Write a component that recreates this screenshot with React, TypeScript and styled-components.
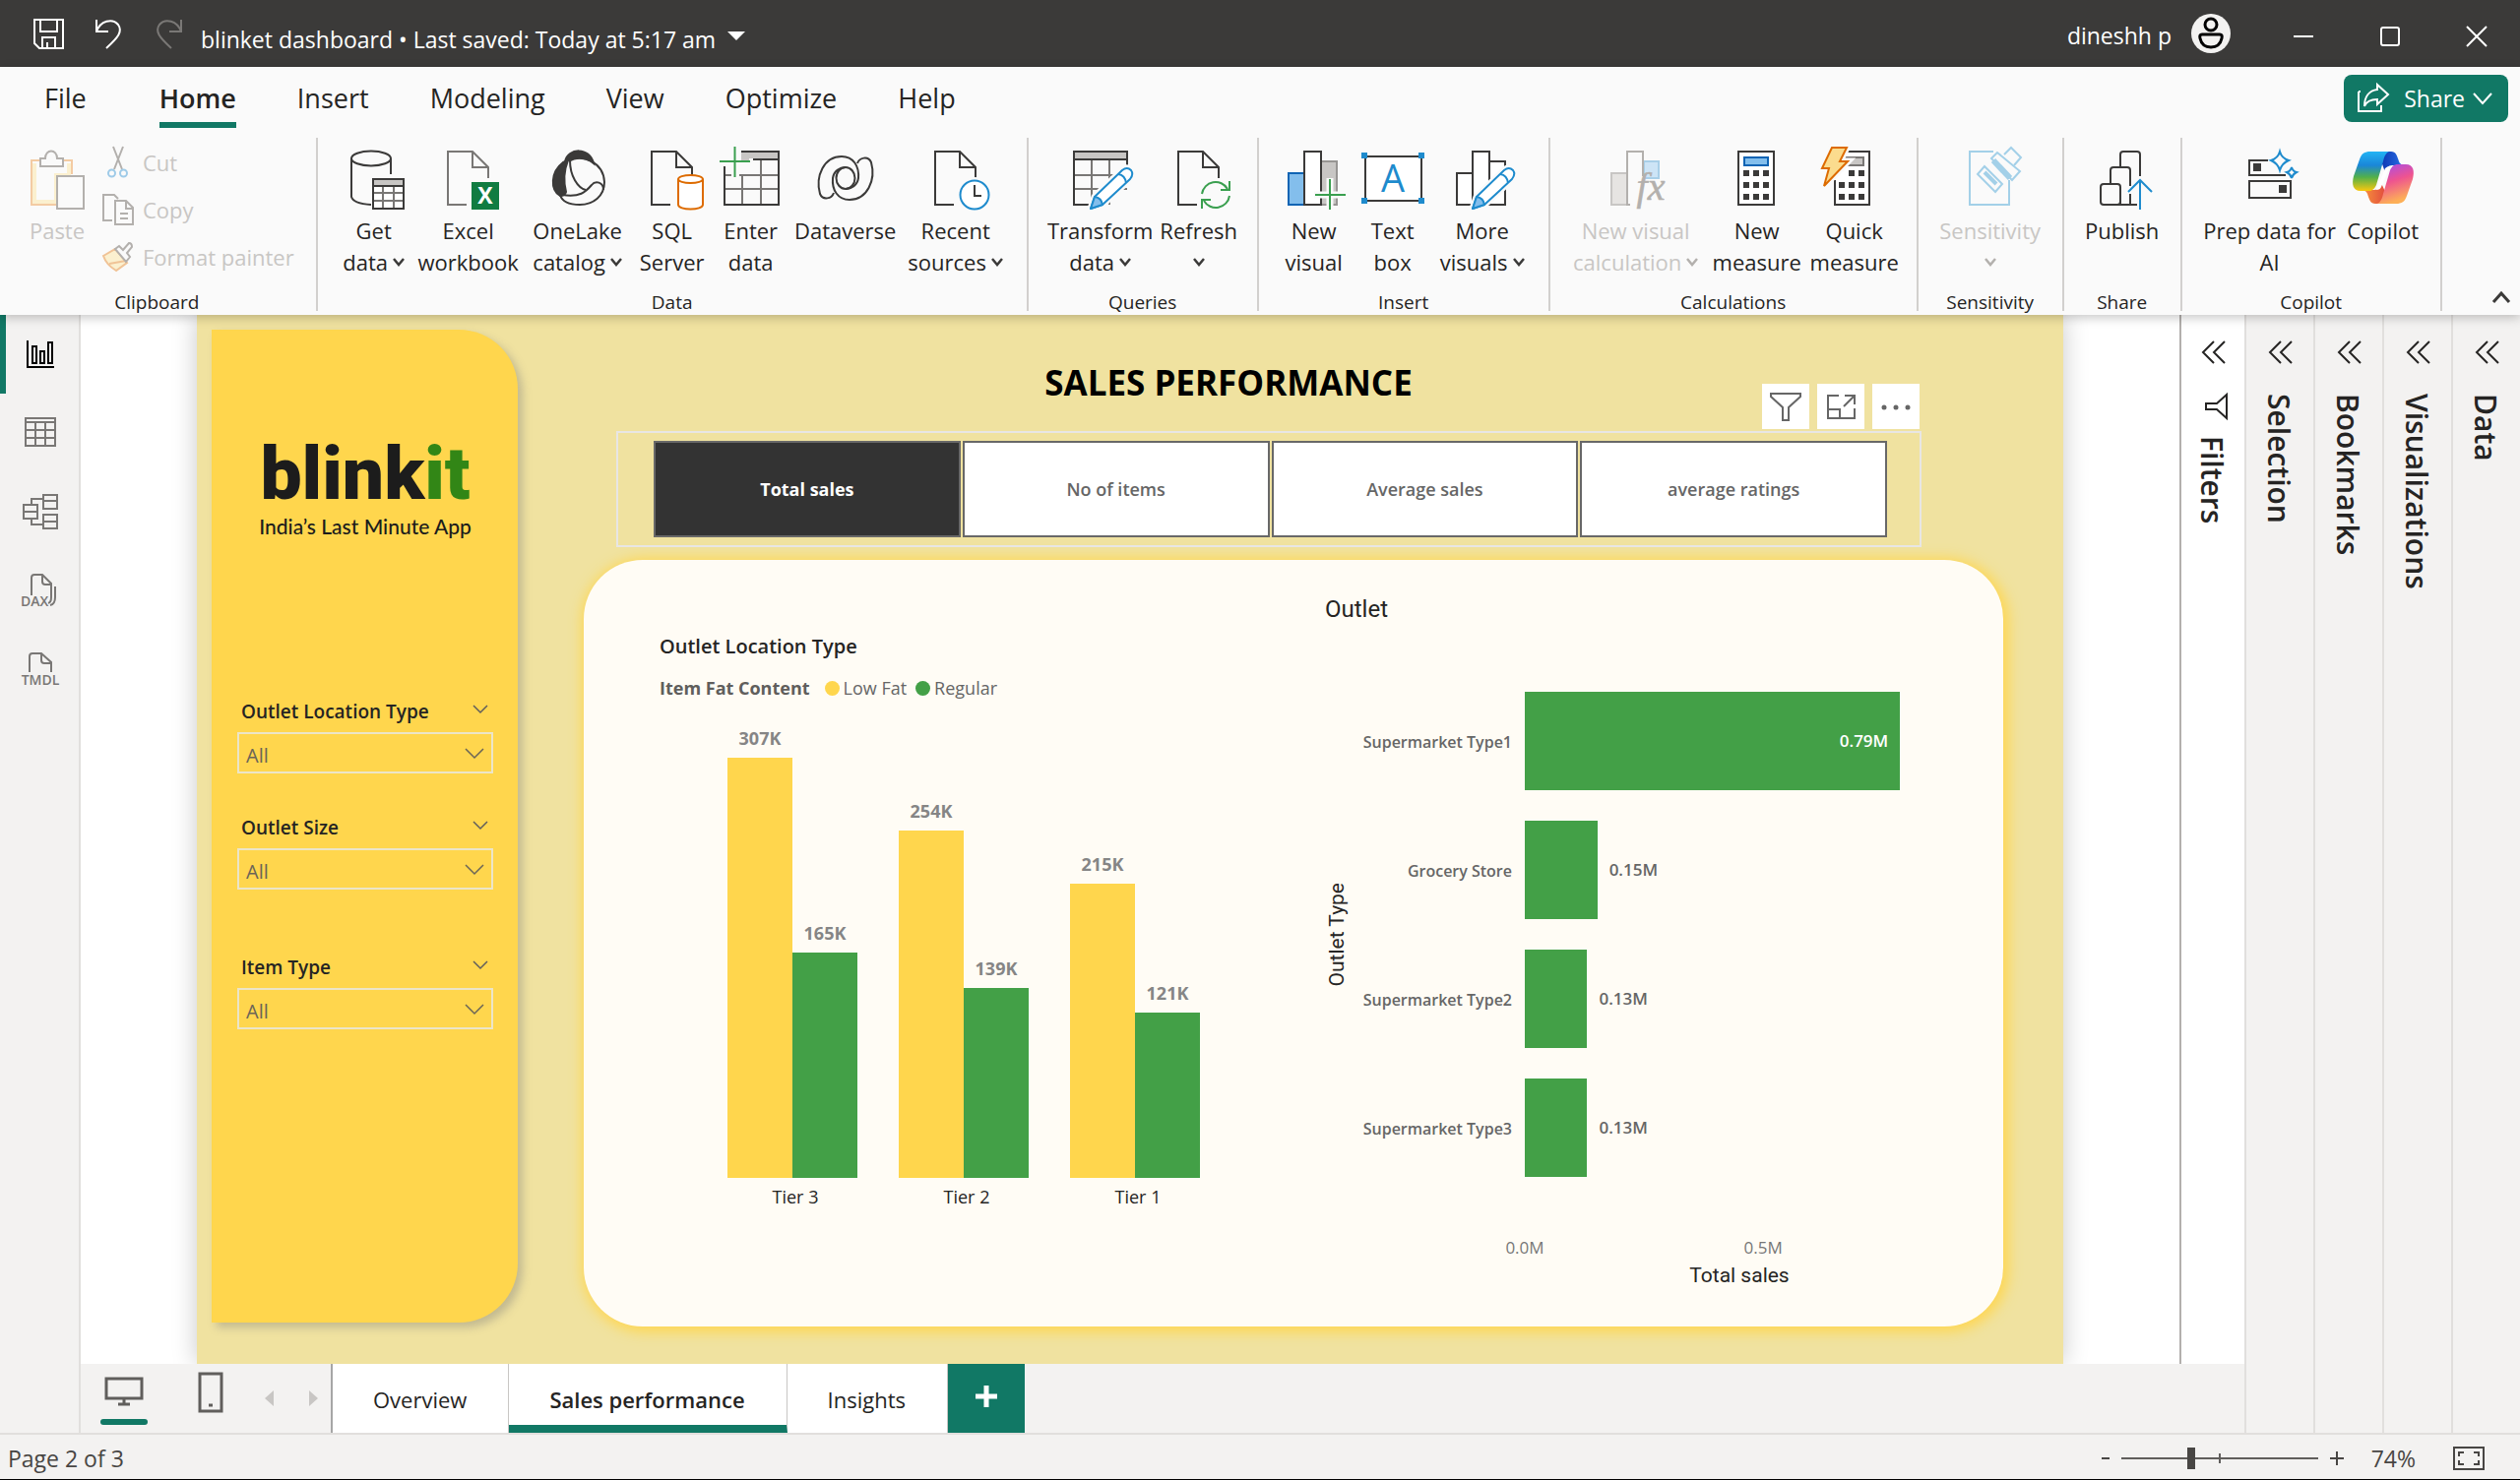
import React from "react";
import styled, { createGlobalStyle } from "styled-components";

const GlobalStyle = createGlobalStyle`
  *, *::before, *::after { box-sizing: border-box; }
  body { margin: 0; background: #f3f2f1; }
  body, button, select, input {
    font-family: "Open Sans", "Noto Sans", sans-serif;
    color: #252423;
  }
  button { border: 0; padding: 0; background: none; cursor: pointer; }
  svg { display: block; flex: none; }
`;

const teal = "#117865";
const ink = "#3b3a39";
const line = "#e1dfdd";
const yellow = "#ffd64d";
const green = "#43a047";
const blue = "#1e8bcd";
const axisFont = `Roboto, "Open Sans", sans-serif`;

/* ---------- shell ---------- */

const Shell = styled.div`
  display: flex;
  flex-direction: column;
  min-height: 100vh;
  border-bottom: 1px solid #000;
`;

const TitleBar = styled.header`
  display: flex;
  align-items: center;
  height: 68px;
  padding: 0 34px;
  background: ${ink};
`;

const QuickActions = styled.div`
  display: flex;
  align-items: center;
  gap: 30px;
`;

const DocumentButton = styled.button`
  display: flex;
  align-items: center;
  gap: 12px;
  margin: 12px auto 0 18px;
  font-size: 23px;
  line-height: 32px;
  color: #fff;

  svg { margin-bottom: 4px; }
`;

const Account = styled.button`
  display: flex;
  align-items: center;
  gap: 20px;
  margin-right: 64px;
  font-size: 23px;
  line-height: 32px;
  color: #fff;

  span { padding-top: 4px; }
`;

const WindowControls = styled.div`
  display: flex;
  align-items: center;
  gap: 68px;
  padding-top: 6px;
`;

/* ---------- ribbon ---------- */

const Ribbon = styled.div`
  position: relative;
  z-index: 2;
  padding-bottom: 4px;
  background: #fafafa;
  box-shadow: 0 3px 10px rgba(0, 0, 0, 0.22);
`;

const RibbonTabs = styled.nav`
  display: flex;
  align-items: flex-start;
  height: 72px;
  padding: 0 12px 0 14px;
`;

const RibbonTab = styled.button<{ $active?: boolean; $first?: boolean }>`
  padding: 0 31px;
  margin-right: ${(p) => (p.$first ? 12 : 0)}px;
  font-size: 27px;
  line-height: 48px;
  font-weight: ${(p) => (p.$active ? 600 : 400)};

  span {
    display: block;
    height: 62px;
    padding-top: 8px;
    border-bottom: 6px solid ${(p) => (p.$active ? teal : "transparent")};
  }
`;

const ShareButton = styled.button`
  display: flex;
  align-items: center;
  gap: 8px;
  height: 48px;
  margin: 8px 0 0 auto;
  padding: 0 16px 0 14px;
  border-radius: 8px;
  background: ${teal};
  color: #fff;
  font-size: 23px;

  span { margin-left: 7px; }
`;

const RibbonGroups = styled.div`
  display: flex;
  height: 176px;
`;

const Group = styled.section`
  display: flex;
  flex-direction: column;
  justify-content: space-between;
  padding: 0 16px;
  border-right: 2px solid #d2d0ce;
`;

const ClipboardPanel = styled(Group)`
  padding-right: 18px;
`;

const GroupBody = styled.div`
  display: flex;
`;

const GroupName = styled.h2`
  margin: 0;
  font-size: 19px;
  line-height: 18px;
  font-weight: 400;
  text-align: center;
`;

const BigButton = styled.button<{ $width: number }>`
  display: flex;
  flex-direction: column;
  align-items: center;
  gap: 5px;
  width: ${(p) => p.$width}px;
  padding-top: 9px;
  font-size: 22px;
  line-height: 32px;
  white-space: nowrap;

  &:disabled { color: #c8c6c4; }
`;

const LabelLine = styled.span`
  display: flex;
  align-items: center;
  justify-content: center;
  gap: 5px;
  min-height: 32px;
`;

const SmallButtons = styled.div`
  display: flex;
  flex-direction: column;
  padding-top: 1px;
`;

const SmallButton = styled.button`
  display: flex;
  align-items: center;
  gap: 9px;
  height: 48px;
  padding: 0 4px;
  font-size: 22px;
  white-space: nowrap;

  &:disabled { color: #c8c6c4; }
`;

const CollapseRibbon = styled.button`
  align-self: flex-end;
  margin: 0 10px 8px auto;
`;

/* ---------- workspace ---------- */

const Workspace = styled.div`
  display: flex;
  flex: 1;
  border-bottom: 2px solid ${line};
`;

const ViewRail = styled.nav`
  display: flex;
  flex-direction: column;
  width: 82px;
  border-right: 2px solid ${line};
`;

const ViewButton = styled.button<{ $active?: boolean }>`
  display: flex;
  align-items: center;
  justify-content: center;
  height: 80px;
  padding-left: 2px;
  box-shadow: inset 6px 0 ${(p) => (p.$active ? teal : "transparent")};
`;

const Center = styled.div`
  display: flex;
  flex: 1;
  flex-direction: column;
`;

const CanvasRow = styled.div`
  display: flex;
  flex: 1;
  background: #fff;
`;

const Canvas = styled.main`
  display: flex;
  flex: 1;
  padding: 0 118px;
  overflow: hidden;
`;

const Report = styled.div`
  display: grid;
  grid-template-columns: 311px 1fr;
  column-gap: 67px;
  flex: 1;
  padding: 15px 61px 38px 15px;
  background: #f0e2a0;
  box-shadow: 0 0 24px rgba(0, 0, 0, 0.22);
`;

const Pane = styled.aside<{ $open?: boolean }>`
  display: flex;
  flex-direction: column;
  align-items: center;
  gap: 30px;
  width: ${(p) => (p.$open ? 66 : 70)}px;
  padding-top: 26px;
  border-left: 2px solid ${(p) => (p.$open ? "#b3b0ad" : line)};
  background: ${(p) => (p.$open ? "#fff" : "transparent")};
`;

const PaneTitle = styled.h2`
  display: flex;
  align-items: center;
  gap: 17px;
  margin: 0;
  padding-right: 3px;
  font-size: 30px;
  line-height: 36px;
  font-weight: 600;
  writing-mode: vertical-rl;
`;

/* ---------- report: side panel ---------- */

const SidePanel = styled.section`
  margin-bottom: 4px;
  padding: 105px 25px 0 26px;
  border-radius: 0 60px 60px 0;
  background: ${yellow};
  box-shadow: 5px 5px 8px rgba(120, 120, 120, 0.38);
`;

const Brand = styled.div`
  display: flex;
  flex-direction: column;
  align-items: center;
  height: 262px;
  color: #1c1c1c;
`;

const BrandName = styled.div`
  font-family: Roboto, "Open Sans", sans-serif;
  font-size: 75px;
  line-height: 82px;
  font-weight: 900;

  em { font-style: normal; color: #328616; }
`;

const BrandLine = styled.div`
  font-family: Lato, "Open Sans", sans-serif;
  font-size: 21px;
  line-height: 26px;
  font-weight: 500;
`;

const Slicer = styled.div<{ $gapAfter?: number }>`
  margin-bottom: ${(p) => p.$gapAfter ?? 0}px;
`;

const SlicerHead = styled.div`
  display: flex;
  align-items: center;
  justify-content: space-between;
  height: 42px;
  padding: 0 5px 0 4px;

  label {
    font-size: 19px;
    line-height: 26px;
    font-weight: 600;
  }

  button { padding-bottom: 6px; }
`;

const SlicerBox = styled.div`
  position: relative;

  select {
    display: block;
    width: 100%;
    height: 42px;
    padding: 4px 7px 0;
    border: 2px solid #ece5c8;
    border-radius: 0;
    background: none;
    appearance: none;
    font-size: 20px;
    color: #6b6557;
  }

  svg {
    position: absolute;
    top: 16px;
    right: 9px;
    pointer-events: none;
  }
`;

/* ---------- report: content ---------- */

const Content = styled.div`
  display: flex;
  flex-direction: column;
`;

const ReportTitle = styled.h1`
  margin: 30px 132px 25px 0;
  font-size: 35px;
  line-height: 48px;
  font-weight: 700;
  text-align: center;
  color: #000;
`;

const MeasureFrame = styled.div`
  position: relative;
  display: grid;
  grid-template-columns: repeat(4, 1fr);
  gap: 2px;
  margin: 0 83px 13px 33px;
  padding: 8px 33px 8px 36px;
  border: 2px solid #e8e6e4;
`;

const MeasureButton = styled.button<{ $active?: boolean }>`
  height: 98px;
  border: 2px solid #686868;
  background: ${(p) => (p.$active ? "#333" : "#fff")};
  color: ${(p) => (p.$active ? "#fff" : "#666")};
  font-size: 18px;
  font-weight: ${(p) => (p.$active ? 700 : 600)};
`;

const VisualActions = styled.div`
  position: absolute;
  right: 0;
  bottom: 100%;
  display: flex;
  gap: 8px;
  padding-bottom: 4px;

  button {
    display: flex;
    align-items: center;
    justify-content: center;
    width: 48px;
    height: 46px;
    background: #fff;
  }
`;

const Card = styled.section`
  display: grid;
  grid-template-columns: 676px 1fr;
  flex: 1;
  padding: 0 50px 0 77px;
  border-radius: 60px;
  background: #fffcf5;
  box-shadow: 2px 2px 14px 3px ${yellow};
`;

const Visual = styled.figure`
  margin: 0;
  padding-top: 74px;
`;

const OutletVisual = styled(Visual)`
  padding-top: 34px;
`;

const VisualTitle = styled.figcaption`
  font-size: 20px;
  line-height: 28px;
  font-weight: 600;
`;

const OutletTitle = styled(VisualTitle)`
  font-family: ${axisFont};
  font-size: 24px;
  line-height: 32px;
  font-weight: 400;
`;

const Legend = styled.div`
  display: flex;
  align-items: center;
  margin-top: 14px;
  font-size: 18px;
  line-height: 28px;
  color: #666;

  strong { margin-right: 15px; color: #605e5c; }
`;

const LegendItem = styled.span<{ $color: string }>`
  display: flex;
  align-items: center;
  gap: 4px;
  margin-right: 9px;

  &::before {
    content: "";
    width: 15px;
    height: 15px;
    border-radius: 50%;
    background: ${(p) => p.$color};
  }
`;

const Clusters = styled.div`
  display: flex;
  gap: 42px;
  padding-left: 69px;
`;

const Cluster = styled.div`
  display: flex;
  flex-direction: column;
  gap: 7px;
  font-size: 18px;
  line-height: 24px;
  text-align: center;
`;

const ClusterName = styled.div`
  padding-left: 6px;
`;

const ClusterBars = styled.div`
  display: flex;
  align-items: flex-end;
  height: 484px;
`;

const Column = styled.div`
  display: flex;
  flex-direction: column;
  gap: 8px;
  width: 66px;
  font-weight: 700;
  color: #858585;
`;

const Fill = styled.div<{ $color: string }>`
  background: ${(p) => p.$color};
`;

const RowsLayout = styled.div`
  display: grid;
  grid-template-columns: 24px 1fr;
  align-items: center;
  margin-top: 68px;
`;

const YTitle = styled.div`
  font-family: ${axisFont};
  font-size: 21px;
  line-height: 24px;
  writing-mode: vertical-rl;
  transform: rotate(180deg);
`;

const Rows = styled.div`
  display: grid;
  gap: 31px;
`;

const Row = styled.div`
  display: grid;
  grid-template-columns: 166px 1fr;
  column-gap: 13px;
  align-items: center;
  height: 100px;
  font-size: 17px;
  line-height: 24px;
  font-weight: 600;
  color: #666;
`;

const RowName = styled.div`
  padding-top: 2px;
  font-size: 16px;
  text-align: right;
  white-space: nowrap;
`;

const Track = styled.div`
  display: flex;
  align-items: center;
  gap: 12px;
`;

const RowBar = styled.div`
  display: flex;
  align-items: center;
  justify-content: flex-end;
  height: 100px;
  padding-right: 12px;
  background: ${green};
  color: #fff;
`;

const Axis = styled.div`
  position: relative;
  height: 24px;
  margin: 60px 0 4px 203px;
  font-size: 17px;
  line-height: 24px;
  color: #777;

  span { position: absolute; transform: translateX(-50%); }
`;

const XTitle = styled.div`
  margin-left: 203px;
  font-family: ${axisFont};
  font-size: 21px;
  line-height: 24px;
  text-align: center;
`;

/* ---------- page tabs and status ---------- */

const PageBar = styled.nav`
  display: flex;
  align-items: stretch;
  height: 70px;
`;

const LayoutSwitch = styled.div`
  display: flex;
  align-items: center;
  width: 256px;
  padding-left: 20px;
  border-right: 2px solid #a6a6a6;
`;

const LayoutButton = styled.button<{ $active?: boolean }>`
  display: flex;
  flex-direction: column;
  align-items: center;
  justify-content: space-between;
  width: 48px;
  height: 54px;

  &::after {
    content: "";
    width: 48px;
    height: 6px;
    border-radius: 3px;
    background: ${(p) => (p.$active ? teal : "transparent")};
  }
`;

const LayoutGap = styled.div`
  width: 40px;
`;

const PageArrows = styled.div`
  display: flex;
  gap: 36px;
  margin-left: 31px;
`;

const PageTab = styled.button<{ $active?: boolean }>`
  padding: ${(p) => (p.$active ? 10 : 2)}px 42px 0 41px;
  border-right: 1px solid #c8c6c4;
  border-bottom: ${(p) => (p.$active ? `8px solid ${teal}` : "0")};
  background: #fff;
  font-size: 22px;
  font-weight: ${(p) => (p.$active ? 600 : 400)};
`;

const AddPage = styled.button`
  display: flex;
  align-items: center;
  justify-content: center;
  width: 78px;
  background: ${teal};
`;

const StatusBar = styled.footer`
  display: flex;
  align-items: center;
  height: 45px;
  padding: 2px 36px 0 8px;
  font-size: 23px;
  line-height: 32px;
  color: #484644;
`;

const Zoom = styled.div`
  display: flex;
  align-items: center;
  gap: 12px;
  margin-left: auto;
`;

const ZoomSlider = styled.input`
  width: 200px;
  height: 24px;
  margin: 0;
  appearance: none;
  background:
    linear-gradient(#605e5c, #605e5c) 50% 50% / 2px 10px no-repeat,
    linear-gradient(#605e5c, #605e5c) 50% 50% / 100% 2px no-repeat;

  &::-webkit-slider-thumb {
    appearance: none;
    width: 8px;
    height: 22px;
    background: #484644;
  }
`;

const ZoomValue = styled.button`
  margin: 0 26px 0 16px;
  font-size: 23px;
  color: #484644;
`;

/* ---------- icons ---------- */

type IconProps = { children: React.ReactNode; size?: number; h?: number; stroke?: string; sw?: number };

const Icon = ({ children, size = 64, h, stroke = ink, sw = 2 }: IconProps) => (
  <svg
    width={size}
    height={h ?? size}
    viewBox={`0 0 ${size} ${h ?? size}`}
    fill="none"
    stroke={stroke}
    strokeWidth={sw}
    overflow="visible"
    aria-hidden="true"
  >
    {children}
  </svg>
);

const Chevron = ({ w = 20, h = 10, color = "#605e5c", sw = 2, up = false }) => (
  <Icon size={w} h={h} stroke={color} sw={sw}>
    <path d={up ? `M1 ${h - 1}L${w / 2} 1L${w - 1} ${h - 1}` : `M1 1L${w / 2} ${h - 1}L${w - 1} 1`} />
  </Icon>
);

const Sheet = ({ color = ink }) => (
  <path stroke={color} d="M30 59H11V5H36L52 21V32M36 5V21H52" />
);

const Pencil = () => (
  <g strokeLinejoin="round">
    <path d="M22 63L26 51L54 24Q59 20 63 24Q66 28 62 33L34 59Z" stroke="#fafafa" strokeWidth="7" />
    <path d="M22 63L26 51L54 24Q59 20 63 24Q66 28 62 33L34 59Z" fill="#fff" stroke={blue} />
    <path d="M22 63L26 51Q33 52 34 59Z" fill="#83beec" stroke={blue} />
    <path d="M50 28Q57 29 58 37" stroke={blue} />
  </g>
);

const icons: Record<string, React.ReactNode> = {
  paste: (
    <Icon stroke="#b3b0ad">
      <path d="M32 59H6V14H14M38 14H47V28" stroke="#f3cba3" strokeWidth="2" />
      <path d="M9 17V56H31V29H44V17" stroke="#fbf0cf" strokeWidth="4" />
      <path d="M15 20V12H20C20 2 32 2 32 12H38V20Z" fill="#fafafa" />
      <rect x="32" y="30" width="27" height="33" fill="#fafafa" />
    </Icon>
  ),
  getData: (
    <Icon>
      <ellipse cx="29" cy="12" rx="20" ry="7.5" />
      <path d="M9 12V51Q11 58 29 59M49 12V28" />
      <rect x="31" y="33" width="31" height="30" fill="#fff" />
      <path d="M32 34H61V39H32Z" fill="#c8c6c4" stroke="none" />
      <path d="M31 47H62M31 55H62M41 40V63M52 40V63" stroke="#797775" />
      <path d="M31 40H62" />
      <rect x="31" y="33" width="31" height="30" />
    </Icon>
  ),
  excel: (
    <Icon>
      <Sheet color="#797775" />
      <rect x="35" y="36" width="28" height="28" fill="#107c41" stroke="none" />
      <text x="49" y="58" textAnchor="middle" fontSize="23" fontWeight="700" fontFamily="Open Sans" fill="#fff" stroke="none">X</text>
    </Icon>
  ),
  oneLake: (
    <Icon>
      <path d="M19 15C22 1 44 0 48 17C40 10 28 10 19 15Z" fill={ink} />
      <path d="M17 16C4 26 4 44 14 50Q19 50 20 46C17 34 18 24 22 14Z" fill={ink} />
      <path d="M23 15C36 6 58 16 59 36C59 50 48 59 34 59C24 59 16 56 14 49" />
      <path d="M24 14C24 30 32 42 40 44" />
      <path d="M16 49C34 52 40 46 46 39C50 34 58 36 58 44" />
    </Icon>
  ),
  sql: (
    <Icon>
      <Sheet />
      <path d="M35 30H66V64H35Z" fill="#fafafa" stroke="none" />
      <g stroke="#dd6b00" fill="#fff">
        <path d="M38 33V59C38 65 63 65 63 59V33" />
        <ellipse cx="50.500" cy="33" rx="12.500" ry="4" />
      </g>
    </Icon>
  ),
  enterData: (
    <Icon>
      <path d="M22 5H60V12H30V15H22Z" fill="#c8c6c4" stroke="none" />
      <path d="M5 29H12M20 29H60M5 43H60M23 29V60M42 12V60" stroke="#797775" />
      <path d="M22 5H60V59H5V20M34 13H60" />
      <path d="M15.500 0V31M0 15H31" stroke="#3a9f4f" />
    </Icon>
  ),
  dataverse: (
    <Icon>
      <path d="M20 47C18 53 9 55 6 48C1 30 10 10 28 10C40 10 46 20 45 32C44 39 38 43 32 43" />
      <path d="M44 17C46 11 55 9 58 16C63 34 54 54 36 54C24 54 18 44 19 32C20 25 26 21 32 21" />
      <ellipse cx="32" cy="32" rx="9.500" ry="11" />
    </Icon>
  ),
  recent: (
    <Icon>
      <Sheet />
      <circle cx="51" cy="49" r="18" fill="#fafafa" stroke="none" />
      <circle cx="51" cy="49" r="14.500" fill="#fff" stroke={blue} />
      <path d="M51 39V50H58" />
    </Icon>
  ),
  transform: (
    <Icon>
      <path d="M5 5H59V12H5Z" fill="#c8c6c4" stroke="none" />
      <path d="M5 29H59M5 43H59M23 13V59M41 13V59" stroke="#797775" />
      <path d="M5 13H59M30 59H5V5H59V20" />
      <Pencil />
    </Icon>
  ),
  refresh: (
    <Icon>
      <Sheet />
      <circle cx="49" cy="49" r="17" fill="#fafafa" stroke="none" />
      <g stroke="#3a9f4f">
        <path d="M35 48A14 14 0 0 1 61 43M63 35V44H54" />
        <path d="M63 50A14 14 0 0 1 37 55M35 63V54H44" />
      </g>
    </Icon>
  ),
  newVisual: (
    <Icon>
      <path d="M39 15H55V59H39" fill="#c8c6c4" stroke="#979593" />
      <rect x="6" y="27" width="16" height="32" fill="#83beec" stroke="#0f64b4" />
      <rect x="22" y="5" width="17" height="54" fill="#fff" />
      <path d="M48 32V64M32 49H64" stroke="#fafafa" strokeWidth="7" />
      <path d="M48 33V64M33 49H64" stroke="#3a9f4f" />
    </Icon>
  ),
  textBox: (
    <Icon>
      <rect x="4" y="10" width="57" height="45" fill="#fff" />
      <path d="M0 6H6V12H0ZM58 6H64V12H58ZM0 52H6V58H0ZM58 52H64V58H58Z" fill={blue} stroke="none" />
      <text x="32" y="46" textAnchor="middle" fontSize="38" fontFamily="Open Sans" fill={blue} stroke="none">A</text>
    </Icon>
  ),
  moreVisuals: (
    <Icon>
      <path d="M6 27H22V59H6ZM39 15H55V59H39" fill="#fff" />
      <rect x="22" y="5" width="17" height="54" fill="#fff" />
      <Pencil />
    </Icon>
  ),
  visualCalc: (
    <Icon stroke="#b3b0ad">
      <path d="M40 15H55V32H40Z" fill="#cde4f6" stroke="#a9cfe8" />
      <rect x="7" y="27" width="16" height="32" fill="#e6e4e2" stroke="#c8c6c4" />
      <path d="M26 59H23V5H39V30" fill="#fafafa" />
      <text x="47" y="54" textAnchor="middle" fontSize="40" fontStyle="italic" fontFamily="Liberation Serif" fill="#b3b0ad" stroke="#b3b0ad" strokeWidth="0.500">fx</text>
    </Icon>
  ),
  newMeasure: (
    <Icon>
      <rect x="13" y="5" width="36" height="54" fill="#fff" />
      <rect x="19" y="11" width="24" height="8" fill="#83beec" stroke="#0f64b4" />
      <path d="M21 24V30M31 24V30M41 24V30M21 36V42M31 36V42M41 36V42M21 48V54M31 48V54M41 48V54" strokeWidth="6" />
    </Icon>
  ),
  quickMeasure: (
    <Icon>
      <path d="M12 34V59H47V5H24" fill="#fff" />
      <rect x="20" y="11" width="21" height="8" fill="#c8c6c4" stroke="#797775" />
      <path d="M29 24V30M39 24V30M19 36V42M29 36V42M39 36V42M19 48V54M29 48V54M39 48V54" strokeWidth="6" />
      <path d="M9 1H24L17 15H25L1 40L6 22H-1Z" fill="#fbdc8e" stroke="#fafafa" strokeWidth="7" />
      <path d="M9 1H24L17 15H25L1 40L6 22H-1Z" fill="#fbdc8e" stroke="#dd6b00" />
    </Icon>
  ),
  sensitivity: (
    <Icon stroke="#a3d0e8">
      <path d="M35 5H11V59H51V34" />
      <path d="M26 20L44 38L37 46L19 28Z" />
      <path d="M26 26L38 38" strokeWidth="4" />
      <path d="M33 12L39 6L62 25L54 34Z" />
      <path d="M35 14L52 32" strokeWidth="6" />
      <path d="M46 8L53 1L63 11L56 19" />
    </Icon>
  ),
  publish: (
    <Icon>
      <rect x="10" y="38" width="20" height="21" rx="3" />
      <path d="M20 38V24Q20 21 23 21H37Q40 21 40 24V40M40 48V59" />
      <path d="M30 21V8Q30 5 33 5H47Q50 5 50 8V30" />
      <path d="M13 59H47M30 41V59" />
      <path d="M50 64V35M38 46L50 34L62 46" stroke={blue} />
    </Icon>
  ),
  prep: (
    <Icon>
      <path d="M30 14H11V29H48" />
      <rect x="11" y="35" width="42" height="17" />
      <path d="M15 17H23V25H15ZM41 39H49V47H41Z" fill={ink} stroke="none" />
      <path d="M42 5Q44 12 51 14Q44 17 42 24Q40 17 33 14Q40 12 42 5ZM54 21Q55 25 59 26Q55 28 54 32Q53 28 49 26Q53 25 54 21Z" stroke={blue} />
    </Icon>
  ),
  copilot: (
    <Icon stroke="none">
      <defs>
        <linearGradient id="cpA" x1="0" y1="0" x2="0" y2="1">
          <stop offset="0" stopColor="#22b4f4" />
          <stop offset="0.350" stopColor="#1a86d8" />
          <stop offset="0.650" stopColor="#52b04a" />
          <stop offset="1" stopColor="#f9c80e" />
        </linearGradient>
        <linearGradient id="cpB" x1="0" y1="0" x2="0.300" y2="1">
          <stop offset="0" stopColor="#a14cf0" />
          <stop offset="0.500" stopColor="#ee5390" />
          <stop offset="1" stopColor="#fdaf57" />
        </linearGradient>
        <linearGradient id="cpC" x1="0" y1="0" x2="1" y2="0">
          <stop offset="0" stopColor="#0a35b0" />
          <stop offset="1" stopColor="#2a6fe6" />
        </linearGradient>
        <linearGradient id="cpD" x1="0" y1="0" x2="1" y2="0">
          <stop offset="0" stopColor="#f8933c" />
          <stop offset="1" stopColor="#e0483e" />
        </linearGradient>
      </defs>
      <path d="M30 5H40C45 5 46 9 48 15Q49 18 53 19H41C37 19 35 22 34 26L29 12Z" fill="url(#cpC)" />
      <path d="M34 58H24C19 58 18 54 16 48Q15 45 11 44H23C27 44 29 41 30 37L36 50Z" fill="url(#cpD)" />
      <path d="M19 5H38C34 7 33 11 32 15L25 39C23 43 21 45 17 45H9C1 45 0 38 2 30L8 13C10 7 13 5 19 5Z" fill="url(#cpA)" />
      <path d="M45 58H26C30 56 31 52 32 48L39 24C41 20 43 18 47 18H55C63 18 64 25 62 33L56 50C54 56 51 58 45 58Z" fill="url(#cpB)" />
      <path d="M34 22Q36 20 39 20L30 41Q29 44 25 44Z" fill="#fff" />
    </Icon>
  ),
};

const DoubleChevron = () => (
  <Icon size={24} stroke="#252423">
    <path d="M13 1L2 12L13 23M24 1L13 12L24 23" />
  </Icon>
);

/* ---------- data ---------- */

type RibbonItem = {
  id: string;
  width: number;
  lines: string[];
  menu?: boolean;
  disabled?: boolean;
};

const ribbonGroups: { name: string; items: RibbonItem[] }[] = [
  {
    name: "Data",
    items: [
      { id: "getData", width: 82, lines: ["Get", "data"], menu: true },
      { id: "excel", width: 110, lines: ["Excel", "workbook"] },
      { id: "oneLake", width: 112, lines: ["OneLake", "catalog"], menu: true },
      { id: "sql", width: 80, lines: ["SQL", "Server"] },
      { id: "enterData", width: 80, lines: ["Enter", "data"] },
      { id: "dataverse", width: 112, lines: ["Dataverse"] },
      { id: "recent", width: 112, lines: ["Recent", "sources"], menu: true },
    ],
  },
  {
    name: "Queries",
    items: [
      { id: "transform", width: 114, lines: ["Transform", "data"], menu: true },
      { id: "refresh", width: 86, lines: ["Refresh", ""], menu: true },
    ],
  },
  {
    name: "Insert",
    items: [
      { id: "newVisual", width: 80, lines: ["New", "visual"] },
      { id: "textBox", width: 80, lines: ["Text", "box"] },
      { id: "moreVisuals", width: 102, lines: ["More", "visuals"], menu: true },
    ],
  },
  {
    name: "Calculations",
    items: [
      { id: "visualCalc", width: 142, lines: ["New visual", "calculation"], menu: true, disabled: true },
      { id: "newMeasure", width: 104, lines: ["New", "measure"] },
      { id: "quickMeasure", width: 94, lines: ["Quick", "measure"] },
    ],
  },
  {
    name: "Sensitivity",
    items: [{ id: "sensitivity", width: 114, lines: ["Sensitivity", ""], menu: true, disabled: true }],
  },
  { name: "Share", items: [{ id: "publish", width: 86, lines: ["Publish"] }] },
  {
    name: "Copilot",
    items: [
      { id: "prep", width: 146, lines: ["Prep data for", "AI"] },
      { id: "copilot", width: 84, lines: ["Copilot"] },
    ],
  },
];

const ribbonTabs = ["File", "Home", "Insert", "Modeling", "View", "Optimize", "Help"];

const slicers = [
  { id: "location", label: "Outlet Location Type", gap: 34 },
  { id: "size", label: "Outlet Size", gap: 58 },
  { id: "item", label: "Item Type", gap: 0 },
];

const measures = ["Total sales", "No of items", "Average sales", "average ratings"];

const tiers = [
  { name: "Tier 3", low: 307, regular: 165 },
  { name: "Tier 2", low: 254, regular: 139 },
  { name: "Tier 1", low: 215, regular: 121 },
];

const outlets = [
  { name: "Supermarket Type1", value: 0.787, label: "0.79M" },
  { name: "Grocery Store", value: 0.152, label: "0.15M" },
  { name: "Supermarket Type2", value: 0.131, label: "0.13M" },
  { name: "Supermarket Type3", value: 0.131, label: "0.13M" },
];

const axisMax = 0.9;
const tierScale = 427 / 307;

/* ---------- parts ---------- */

const RibbonButton = ({ item }: { item: RibbonItem }) => (
  <BigButton $width={item.width} disabled={item.disabled}>
    {icons[item.id]}
    <span>
      {item.lines.map((text, i) => (
        <LabelLine key={i}>
          {text}
          {item.menu && i === item.lines.length - 1 && (
            <Chevron w={12} h={8} sw={2.5} color={item.disabled ? "#b3b0ad" : ink} />
          )}
        </LabelLine>
      ))}
    </span>
  </BigButton>
);

const ClipboardGroup = () => (
  <ClipboardPanel>
    <GroupBody>
      <BigButton $width={84} disabled>
        {icons.paste}
        <LabelLine>Paste</LabelLine>
      </BigButton>
      <SmallButtons>
        <SmallButton disabled>
          <Icon size={32} stroke="#b3b0ad">
            <path d="M11 0L20 23M21 0L12 23" />
            <g stroke="#9fcbe8">
              <circle cx="9.500" cy="27" r="3.500" />
              <circle cx="21.500" cy="27" r="3.500" />
            </g>
          </Icon>
          Cut
        </SmallButton>
        <SmallButton disabled>
          <Icon size={32} stroke="#b3b0ad">
            <path d="M10 27H1V1H12L16 5M13 31V7H24L31 14V31ZM24 7V15H31M18 20H26M18 25H26" />
          </Icon>
          Copy
        </SmallButton>
        <SmallButton disabled>
          <Icon size={32} stroke="#b3b0ad">
            <path d="M1 15L13 8L25 22L14 30Q4 24 1 15Z" fill="#fbf0cf" stroke="#f0c396" />
            <path d="M7 23L24 20" stroke="#f0c396" />
            <path d="M13 8L17 5L21 9L27 2Q30 2 30 6L25 12L28 16L24 21Z" fill="#fafafa" />
          </Icon>
          Format painter
        </SmallButton>
      </SmallButtons>
    </GroupBody>
    <GroupName>Clipboard</GroupName>
  </ClipboardPanel>
);

const TierChart = () => (
  <Visual>
    <VisualTitle>Outlet Location Type</VisualTitle>
    <Legend>
      <strong>Item Fat Content</strong>
      <LegendItem $color={yellow}>Low Fat</LegendItem>
      <LegendItem $color={green}>Regular</LegendItem>
    </Legend>
    <Clusters>
      {tiers.map((tier) => (
        <Cluster key={tier.name}>
          <ClusterBars>
            <Column>
              {tier.low}K
              <Fill $color={yellow} style={{ height: Math.round(tier.low * tierScale) }} />
            </Column>
            <Column>
              {tier.regular}K
              <Fill $color={green} style={{ height: Math.round(tier.regular * tierScale) }} />
            </Column>
          </ClusterBars>
          <ClusterName>{tier.name}</ClusterName>
        </Cluster>
      ))}
    </Clusters>
  </Visual>
);

const OutletChart = () => (
  <OutletVisual>
    <OutletTitle>Outlet</OutletTitle>
    <RowsLayout>
      <YTitle>Outlet Type</YTitle>
      <Rows>
        {outlets.map((outlet) => {
          const inside = outlet.value > axisMax / 2;
          return (
            <Row key={outlet.name}>
              <RowName>{outlet.name}</RowName>
              <Track>
                <RowBar style={{ width: `${(outlet.value / axisMax) * 100}%` }}>{inside && outlet.label}</RowBar>
                {!inside && outlet.label}
              </Track>
            </Row>
          );
        })}
      </Rows>
    </RowsLayout>
    <Axis>
      {[0, 0.5].map((tick) => (
        <span key={tick} style={{ left: `${(tick / axisMax) * 100}%` }}>{tick.toFixed(1)}M</span>
      ))}
    </Axis>
    <XTitle>Total sales</XTitle>
  </OutletVisual>
);

const ReportPage = () => (
  <Report>
    <SidePanel>
      <Brand>
        <BrandName>blink<em>it</em></BrandName>
        <BrandLine>India’s Last Minute App</BrandLine>
      </Brand>
      {slicers.map((s) => (
        <Slicer key={s.id} $gapAfter={s.gap}>
          <SlicerHead>
            <label htmlFor={s.id}>{s.label}</label>
            <button aria-label={`${s.label} options`}><Chevron w={16} h={9} sw={1.5} /></button>
          </SlicerHead>
          <SlicerBox>
            <select id={s.id} defaultValue="All">
              <option>All</option>
            </select>
            <Chevron w={20} h={11} sw={1.5} color="#6b6557" />
          </SlicerBox>
        </Slicer>
      ))}
    </SidePanel>
    <Content>
      <ReportTitle>SALES PERFORMANCE</ReportTitle>
      <MeasureFrame>
        {measures.map((m, i) => (
          <MeasureButton key={m} $active={i === 0}>{m}</MeasureButton>
        ))}
        <VisualActions>
          <button aria-label="Filters"><Icon size={32} stroke="#666"><path d="M1 3H31V6L19 17V30H13V17L1 6Z" /></Icon></button>
          <button aria-label="Focus mode">
            <Icon size={32} stroke="#666"><path d="M14 5H3V28H30V18M20 5H30V14M30 5L19 16M3 19H15V28" /></Icon>
          </button>
          <button aria-label="More options">
            <Icon size={32} stroke="none">
              <g fill="#666">
                <circle cx="4" cy="17" r="2.500" />
                <circle cx="16" cy="17" r="2.500" />
                <circle cx="28" cy="17" r="2.500" />
              </g>
            </Icon>
          </button>
        </VisualActions>
      </MeasureFrame>
      <Card>
        <TierChart />
        <OutletChart />
      </Card>
    </Content>
  </Report>
);

const railGray = "#797775";

const Rail = () => (
  <ViewRail>
    <ViewButton $active aria-label="Report view">
      <Icon size={28} stroke="#000"><path d="M1 0V27H28M6 6H10V23H6ZM14 11H18V23H14ZM22 2H26V23H22Z" /></Icon>
    </ViewButton>
    <ViewButton aria-label="Table view">
      <Icon size={32} stroke={railGray}><path d="M1 1H31V29H1ZM1 5H31M1 13H31M1 21H31M11 5V29M21 5V29" /></Icon>
    </ViewButton>
    <ViewButton aria-label="Model view">
      <Icon size={36} stroke={railGray}>
        <path d="M1 11H15V25H1ZM1 18H15M21 1H35V15H21ZM21 7H35M21 21H35V35H21ZM21 28H35M9 11V5H21M9 25V31H21" />
      </Icon>
    </ViewButton>
    <ViewButton aria-label="DAX query view">
      <Icon size={36} h={34} stroke={railGray}>
        <path d="M9 22V4Q9 1 12 1H20L29 10V24Q29 29 26 30M20 1V8Q20 11 23 11H29M33 13V24Q33 31 28 32" />
        <text x="-2" y="33" fontSize="14" fontWeight="600" fontFamily="Open Sans" fill={railGray} stroke="#f3f2f1" strokeWidth="2" paintOrder="stroke">DAX</text>
      </Icon>
    </ViewButton>
    <ViewButton aria-label="TMDL view">
      <Icon size={38} h={34} stroke={railGray}>
        <path d="M8 20V4Q8 1 11 1H20L30 10V20M20 1V8Q20 11 23 11H30" />
        <text x="19" y="33" textAnchor="middle" fontSize="14" fontWeight="600" fontFamily="Open Sans" fill={railGray} stroke="none">TMDL</text>
      </Icon>
    </ViewButton>
  </ViewRail>
);

export default function App() {
  return (
    <Shell>
      <GlobalStyle />
      <TitleBar>
        <QuickActions>
          <button aria-label="Save">
            <Icon size={32} stroke="#fff"><path d="M1 2H30V31H6L1 26ZM7 2V14H24V2M9 31V20H22V31M14 25V31" /></Icon>
          </button>
          <button aria-label="Undo">
            <Icon size={30} stroke="#fff"><path d="M2 1V13H14M2 13C6 2 18 -1 24 6C29 13 24 19 12 30" /></Icon>
          </button>
          <button aria-label="Redo" disabled>
            <Icon size={30} stroke="#7a7876"><path d="M28 1V13H16M28 13C24 2 12 -1 6 6C1 13 6 19 18 30" /></Icon>
          </button>
        </QuickActions>
        <DocumentButton>
          blinket dashboard • Last saved: Today at 5:17 am
          <Icon size={18} h={14} stroke="none"><path d="M0 1H18L9 10Z" fill="#fff" /></Icon>
        </DocumentButton>
        <Account>
          <span>dineshh p</span>
          <Icon size={40} stroke="#000" sw={3}>
            <circle cx="20" cy="20" r="20" fill="#f3f2f1" stroke="none" />
            <circle cx="20" cy="11" r="6" />
            <path d="M11 21H29Q32 21 31 25Q29 34 20 34Q11 34 9 25Q8 21 11 21Z" />
          </Icon>
        </Account>
        <WindowControls>
          <button aria-label="Minimize"><Icon size={20} stroke="#fff"><path d="M0 10H20" /></Icon></button>
          <button aria-label="Maximize"><Icon size={20} stroke="#fff"><rect x="1" y="1" width="18" height="18" rx="2" /></Icon></button>
          <button aria-label="Close"><Icon size={20} stroke="#fff"><path d="M0 0L20 20M20 0L0 20" /></Icon></button>
        </WindowControls>
      </TitleBar>

      <Ribbon>
        <RibbonTabs>
          {ribbonTabs.map((t) => (
            <RibbonTab key={t} $active={t === "Home"} $first={t === "File"}><span>{t}</span></RibbonTab>
          ))}
          <ShareButton>
            <Icon size={32} stroke="#fff">
              <path d="M1 9V29H24V23M1 9H3" />
              <path d="M20 2L31 12L20 22V17C13 17 9 19 7 24C7 14 12 8 20 7Z" />
            </Icon>
            <span>Share</span>
            <Chevron w={20} h={12} color="#fff" />
          </ShareButton>
        </RibbonTabs>
        <RibbonGroups>
          <ClipboardGroup />
          {ribbonGroups.map((g) => (
            <Group key={g.name}>
              <GroupBody>
                {g.items.map((item) => <RibbonButton key={item.id} item={item} />)}
              </GroupBody>
              <GroupName>{g.name}</GroupName>
            </Group>
          ))}
          <CollapseRibbon aria-label="Collapse ribbon"><Chevron w={18} h={11} sw={3} color={ink} up /></CollapseRibbon>
        </RibbonGroups>
      </Ribbon>

      <Workspace>
        <Rail />
        <Center>
          <CanvasRow>
            <Canvas><ReportPage /></Canvas>
            <Pane $open>
              <DoubleChevron />
              <PaneTitle>
                <Icon size={26} stroke="#252423"><path d="M28 1V25L18 16H7V10H18L28 1Z" /></Icon>
                Filters
              </PaneTitle>
            </Pane>
          </CanvasRow>
          <PageBar>
            <LayoutSwitch>
              <LayoutButton $active aria-label="Desktop layout">
                <Icon size={38} h={40} stroke="#605e5c" sw={3}><path d="M1 7H37V27H1ZM19 27V33M13 33H25" /></Icon>
              </LayoutButton>
              <LayoutGap />
              <LayoutButton aria-label="Mobile layout">
                <Icon size={26} h={42} stroke="#605e5c" sw={3}><path d="M2 2H24V40H2ZM11 34H15" /></Icon>
              </LayoutButton>
              <PageArrows>
                <button aria-label="Previous page"><Icon size={9} h={16} stroke="none"><path d="M9 0V16L0 8Z" fill="#c8c6c4" /></Icon></button>
                <button aria-label="Next page"><Icon size={9} h={16} stroke="none"><path d="M0 0V16L9 8Z" fill="#c8c6c4" /></Icon></button>
              </PageArrows>
            </LayoutSwitch>
            <PageTab>Overview</PageTab>
            <PageTab $active>Sales performance</PageTab>
            <PageTab>Insights</PageTab>
            <AddPage aria-label="New page"><Icon size={22} h={26} stroke="#fff" sw={5}><path d="M11 0V22M0 11H22" /></Icon></AddPage>
          </PageBar>
        </Center>
        {["Selection", "Bookmarks", "Visualizations", "Data"].map((name) => (
          <Pane key={name}>
            <DoubleChevron />
            <PaneTitle>{name}</PaneTitle>
          </Pane>
        ))}
      </Workspace>

      <StatusBar>
        Page 2 of 3
        <Zoom>
          <button aria-label="Zoom out"><Icon size={8} h={16} stroke="#484644"><path d="M0 8H8" /></Icon></button>
          <ZoomSlider type="range" min={0} max={100} defaultValue={35} aria-label="Zoom level" />
          <button aria-label="Zoom in"><Icon size={14} stroke="#484644"><path d="M7 0V14M0 7H14" /></Icon></button>
          <ZoomValue>74%</ZoomValue>
          <button aria-label="Fit to page">
            <Icon size={32} h={24} stroke="#484644"><path d="M1 1H31V23H1ZM6 10V6H11M21 6H26V10M26 14V18H21M11 18H6V14" /></Icon>
          </button>
        </Zoom>
      </StatusBar>
    </Shell>
  );
}
